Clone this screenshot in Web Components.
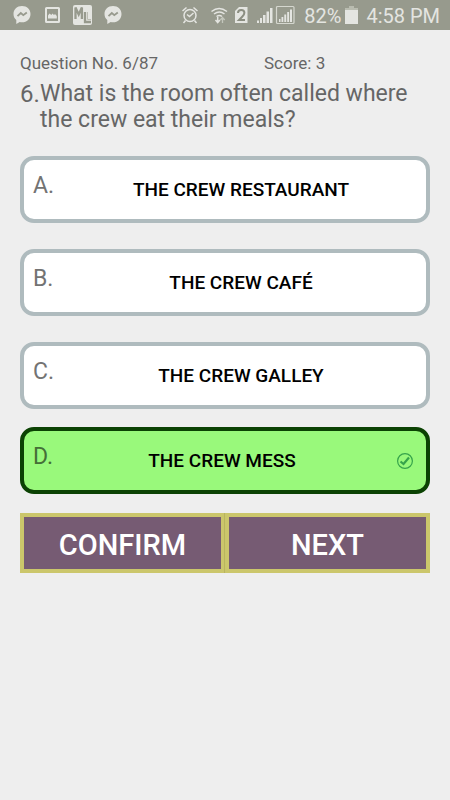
<!DOCTYPE html>
<html lang="en">
<head>
<meta charset="utf-8">
<meta name="viewport" content="width=device-width, initial-scale=1">
<title>Crew Quiz</title>
<style>
  body { margin: 0; background: #eeeeee; font-family: Roboto, "Liberation Sans", sans-serif; color: #666666; }
</style>
</head>
<body>
<quiz-app></quiz-app>

<template id="status-bar">
  <style>
    :host { display: flex; justify-content: space-between; align-items: center; height: 30px; padding: 0 10px 0 13px; background: #979a8d; color: #e4e5e1; font-size: 20px; line-height: 30px; box-sizing: border-box; }
    svg { display: block; flex: none; }
    .left, .right { display: flex; align-items: center; }
    .left { gap: 12px; }
    .clock { margin-left: 8px; padding-top: 1px; }
    .percent { margin-left: 7px; padding-top: 1px; }
    .battery { margin-left: 4px; }
  </style>
  <div class="left">
    <svg width="18" height="18" viewBox="0 0 18 18"><path fill="#e4e5e1" d="M9 0C4 0 .5 3.500.5 8c0 2.500 1 4.600 2.800 6v4l3.400-2c.7.200 1.500.3 2.300.3 5 0 8.500-3.700 8.500-8.300S14 0 9 0z"/><path d="M4.500 10.200l3.300-3.200 2.500 2.200 3.500-2.700" fill="none" stroke="#979a8d" stroke-width="1.800"/></svg>
    <svg width="18" height="18" viewBox="0 0 18 18"><rect x="3" y="2" width="13" height="14" rx=".5" fill="none" stroke="#e4e5e1" stroke-width="2"/><path fill="#e4e5e1" d="M5 12.500V9.500l1.500-2L8.300 9 9.500 7.500 11 9l1-1 1.800 2v2.500z"/></svg>
    <svg width="19" height="20" viewBox="0 0 19 20"><rect width="19" height="20" rx="2" fill="#e4e5e1"/><path d="M2.500 14V2.500l3.200 7 3.200-7V14M12 7v10h6" fill="none" stroke="#979a8d" stroke-width="2.300"/><path d="M14.500 7v7.500H18" fill="none" stroke="#babcb2"/></svg>
    <svg width="18" height="18" viewBox="0 0 18 18"><path fill="#e4e5e1" d="M9 0C4 0 .5 3.500.5 8c0 2.500 1 4.600 2.800 6v4l3.400-2c.7.200 1.500.3 2.300.3 5 0 8.500-3.700 8.500-8.300S14 0 9 0z"/><path d="M4.500 10.200l3.300-3.200 2.500 2.200 3.500-2.700" fill="none" stroke="#979a8d" stroke-width="1.800"/></svg>
  </div>
  <div class="right">
    <svg width="116" height="20" viewBox="0 0 116 20">
      <g fill="none" stroke="#e4e5e1" stroke-width="1.500">
        <circle cx="9" cy="10.500" r="6"/>
        <path d="M6 9.500l2.500 2 4-3.500M1.500 6l4-3.500M16.500 6l-4-3.500M4.500 15.500l-2 2.500M13.500 15.500l2 2.500"/>
        <path d="M30.500 6.500q7.500-6 15.500 0M33 9q5.500-4 10.500 0M35.500 11.500q3-2 5.500 0"/>
        <path d="M36.700 12v5.500M34.500 15l2.200 2.500 2.200-2.500"/>
      </g>
      <path d="M41.500 18v-5M39.300 15l2.200-2.500 2.200 2.500" fill="none" stroke="#c3c6bc" stroke-width="1.300"/>
      <path fill="#e4e5e1" d="M58 2h8.500v16H54V6z"/>
      <path d="M57 8q0-3 3.200-3t3.200 2.800q0 1.700-2.200 3.900L58 15h6" fill="none" stroke="#8b8e81" stroke-width="2"/>
      <path fill="#e4e5e1" d="M76 15.500h2V18h-2zM79 13h2v5h-2zM82 10h2.500v8H82zM85.500 6.500h2.500V18h-2.500zM89 3h2.500v15H89z"/>
      <rect x="95.500" y="1.500" width="17.500" height="17" rx="1" fill="none" stroke="#d5d7cf" stroke-width="1.200"/>
      <path fill="#e4e5e1" d="M98 14h1.500v3H98zM100.500 12h1.800v5h-1.800zM103.300 9.500h1.900V17h-1.900zM106.200 7h1.900v10h-1.900zM109 4.500h2V17h-2z"/>
    </svg>
    <span class="percent">82%</span>
    <svg class="battery" width="13" height="20" viewBox="0 0 13 20"><path fill="#b9bcb0" d="M4 1h5v2h4v3H0V3h4z"/><path fill="#e4e5e1" d="M0 5h13v14H0z"/></svg>
    <span class="clock">4:58 PM</span>
  </div>
</template>

<template id="quiz-question">
  <style>
    :host { display: block; }
    .meta { display: grid; grid-template-columns: 244px 1fr; font-size: 17px; line-height: 24px; }
    .question { display: grid; grid-template-columns: 20px 1fr; margin: 6px 0 0; font-size: 23px; line-height: 26px; font-weight: 400; }
    .number { font-size: 24px; }
  </style>
  <div class="meta"><slot name="progress"></slot><slot name="score"></slot></div>
  <h1 class="question"><span class="number"><slot name="number"></slot></span><span><slot></slot></span></h1>
</template>

<template id="quiz-option">
  <style>
    :host { display: block; }
    button { display: grid; grid-template-columns: 32px 1fr; width: 100%; min-height: 67px; align-items: center; box-sizing: border-box; margin: 0; padding: 0; border: 4px solid #afbbbe; border-radius: 14px; background: #ffffff; font: inherit; color: #000000; cursor: pointer; }
    .letter { align-self: start; margin-top: 13px; padding-left: 9px; text-align: left; font-size: 23px; line-height: 26px; color: #737373; }
    .answer { text-align: center; font-size: 19px; line-height: 24px; font-weight: 500; }
    svg { display: none; }
    :host([correct]) button { grid-template-columns: 32px 1fr 38px; border-color: #0b4203; background: #99f97b; }
    :host([correct]) .letter { color: #456f37; }
    :host([correct]) svg { display: block; margin-left: 8px; }
  </style>
  <button type="button">
    <span class="letter"><slot name="letter"></slot></span>
    <span class="answer"><slot></slot></span>
    <svg width="18" height="18" viewBox="0 0 18 18" fill="none" stroke="#36a34b"><circle cx="9" cy="9" r="7.400" stroke-width="1.200"/><path d="M4.500 9.500l3 2.500 5.500-6.500" stroke-width="2.200"/></svg>
  </button>
</template>

<template id="action-button">
  <style>
    :host { display: block; flex: 1; }
    :host(:not(:first-child)) button { box-shadow: -1px 0 #b9b45f; }
    button { display: block; width: 100%; height: 60px; box-sizing: border-box; margin: 0; padding: 3px 0 0; border: 4px solid #cbc66b; background: #765b73; color: #ffffff; font-family: inherit; font-size: 29px; line-height: 36px; font-weight: 500; cursor: pointer; }
  </style>
  <button type="button"><slot></slot></button>
</template>

<template id="quiz-app">
  <style>
    :host { display: block; }
    main { padding: 21px 20px; }
    .options { display: grid; gap: 26px; margin-top: 23px; }
    .last { margin-top: 18px; }
    .actions { display: flex; margin-top: 19px; }
  </style>
  <status-bar></status-bar>
  <main>
    <quiz-question>
      <span slot="progress">Question No. 6/87</span>
      <span slot="score">Score: 3</span>
      <span slot="number">6.</span>What is the room often called where the crew eat their meals?
    </quiz-question>
    <div class="options">
      <quiz-option><span slot="letter">A.</span>THE CREW RESTAURANT</quiz-option>
      <quiz-option><span slot="letter">B.</span>THE CREW CAFÉ</quiz-option>
      <quiz-option><span slot="letter">C.</span>THE CREW GALLEY</quiz-option>
    </div>
    <quiz-option class="last" correct><span slot="letter">D.</span>THE CREW MESS</quiz-option>
    <div class="actions">
      <action-button>CONFIRM</action-button>
      <action-button>NEXT</action-button>
    </div>
  </main>
</template>

<script>
  class TemplateElement extends HTMLElement {
    constructor() {
      super();
      const template = document.getElementById(this.localName);
      this.attachShadow({ mode: "open" }).append(template.content.cloneNode(true));
    }
  }
  customElements.define("status-bar", class extends TemplateElement {});
  customElements.define("quiz-question", class extends TemplateElement {});
  customElements.define("quiz-option", class extends TemplateElement {});
  customElements.define("action-button", class extends TemplateElement {});
  customElements.define("quiz-app", class extends TemplateElement {});
</script>
</body>
</html>
